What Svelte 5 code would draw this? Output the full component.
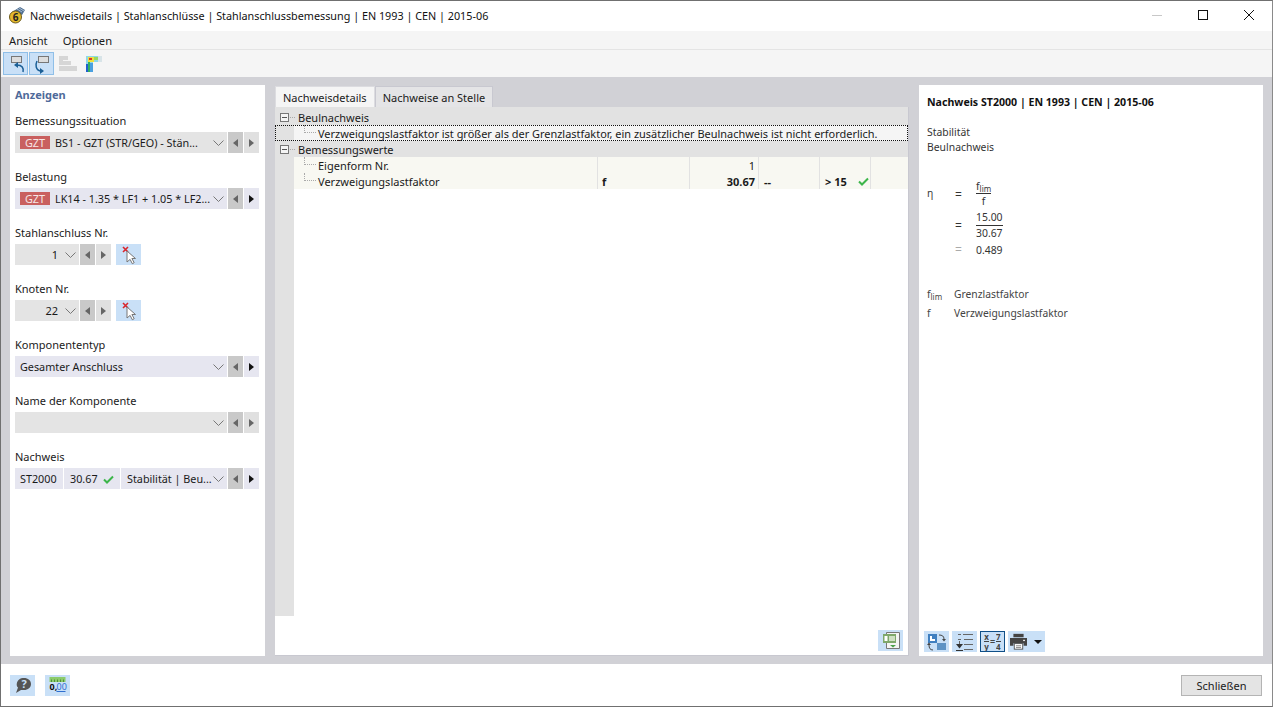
<script lang="ts">
  interface Field {
    label: string;
    kind: 'combo' | 'short' | 'check';
    text?: string;
    badge?: boolean;
    active?: boolean;
  }

  const fields: Field[] = [
    { label: 'Bemessungssituation', kind: 'combo', badge: true, text: 'BS1 - GZT (STR/GEO) - Stän...' },
    { label: 'Belastung', kind: 'combo', badge: true, active: true, text: 'LK14 - 1.35 * LF1 + 1.05 * LF2...' },
    { label: 'Stahlanschluss Nr.', kind: 'short', text: '1' },
    { label: 'Knoten Nr.', kind: 'short', text: '22' },
    { label: 'Komponententyp', kind: 'combo', active: true, text: 'Gesamter Anschluss' },
    { label: 'Name der Komponente', kind: 'combo', text: '' },
    { label: 'Nachweis', kind: 'check', active: true }
  ];
</script>

{#snippet chevron()}
  <svg class="chev" width="11" height="6" viewBox="0 0 11 6"><path d="M.5.5l5 5 5-5" fill="none" stroke="#777" /></svg>
{/snippet}

{#snippet tick()}
  <svg width="11" height="9" viewBox="0 0 11 9"><path d="M1 4.500l3 3 6-6" fill="none" stroke="#3cb54a" stroke-width="2" /></svg>
{/snippet}

{#snippet nav(active = false)}
  <button class="nav" aria-label="Zurück"><i class="tri tri-back"></i></button>
  <button class="nav next" class:active aria-label="Weiter"><i class="tri tri-fwd"></i></button>
{/snippet}

{#snippet picker()}
  <button class="pick" aria-label="Auswählen">
    <svg width="20" height="20" viewBox="0 0 20 20">
      <path d="M4 2l5 5M9 2L4 7" stroke="#d9262c" stroke-width="1.600" />
      <path d="M8 6l8.500 7.500h-3.600l2.300 4.200-1.900 1-2.200-4.300L8 17z" fill="#fff" stroke="#777" />
    </svg>
  </button>
{/snippet}

<div class="window">
  <header class="titlebar">
    <svg class="logo" width="18" height="18" viewBox="0 0 18 18">
      <path d="M4 6L12 1l5 3-3 5z" fill="#4f6f92" />
      <path d="M9 3l5 3M11 2l5 3" stroke="#a8bcd0" />
      <circle cx="7.500" cy="11" r="6" fill="#e3b92c" stroke="#6d5a1a" />
      <text x="7.500" y="15" class="logo-six">6</text>
    </svg>
    <span class="title">Nachweisdetails | Stahlanschlüsse | Stahlanschlussbemessung | EN 1993 | CEN | 2015-06</span>
    <div class="winbtns">
      <svg width="46" height="30" viewBox="0 0 46 30"><path d="M18 15.500h10" stroke="#c8c8c8" /></svg>
      <svg width="46" height="30" viewBox="0 0 46 30"><rect x="18.500" y="10.500" width="9" height="9" fill="none" stroke="#111" /></svg>
      <svg width="46" height="30" viewBox="0 0 46 30"><path d="M18 10l10 10M28 10L18 20" stroke="#111" /></svg>
    </div>
  </header>

  <nav class="menu"><span>Ansicht</span><span>Optionen</span></nav>

  <div class="toolbar">
    <button class="tool on" aria-label="Zurück">
      <svg width="22" height="22" viewBox="0 0 22 22">
        <rect x="6.500" y="3.500" width="10" height="6" fill="#ddd" stroke="#777" />
        <path d="M18 19c1-4-1-7-6-7" fill="none" stroke="#1b5f96" stroke-width="1.500" />
        <path d="M9 12l4-3v6z" fill="#1b5f96" />
      </svg>
    </button>
    <button class="tool on" aria-label="Vor">
      <svg width="22" height="22" viewBox="0 0 22 22">
        <rect x="7.500" y="3.500" width="10" height="6" fill="#ddd" stroke="#777" />
        <path d="M6 8c-2 4-1 9 3 10" fill="none" stroke="#1b5f96" stroke-width="1.500" />
        <path d="M13 18l-4-3v6z" fill="#1b5f96" />
      </svg>
    </button>
    <button class="tool" aria-label="Tabelle">
      <svg width="20" height="18" viewBox="0 0 20 18" fill="#d6d6d6">
        <rect x="1" y="1" width="9" height="4" /><rect x="1" y="5" width="4" height="5" />
        <rect x="1" y="6" width="12" height="4" /><rect x="1" y="11" width="18" height="5" />
      </svg>
    </button>
    <button class="tool" aria-label="Ergebnisse">
      <svg width="17" height="18" viewBox="0 0 17 18">
        <path d="M1 1h16v6H8v10H1z" fill="#8fd8e8" />
        <path d="M1 17V9h2v8z" fill="#1f5fd0" />
        <path d="M3 17V7h2v10z" fill="#30b060" />
        <path d="M5 17V8h3v9z" fill="#4aa0e0" />
        <path d="M3 2h6v5H3z" fill="#f0e03c" />
        <path d="M4 3h3v2H4z" fill="#d8342c" />
        <path d="M9 2h4v3H9z" fill="#9ad860" />
        <path d="M13 1h4v6h-4z" fill="#d8e4e8" />
      </svg>
    </button>
  </div>

  <main class="body">
    <aside class="panel panel-left">
      <h2>Anzeigen</h2>
      {#each fields as f}
        <div class="field">
          <span class="label">{f.label}</span>
          <div class="row">
            {#if f.kind === 'short'}
              <div class="combo short"><span class="val">{f.text}</span>{@render chevron()}</div>
              {@render nav()}
              {@render picker()}
            {:else if f.kind === 'check'}
              <div class="combo active">
                <span class="cell first">ST2000</span>
                <span class="cell second">30.67 {@render tick()}</span>
                <span class="txt">Stabilität | Beu...</span>
                {@render chevron()}
              </div>
              {@render nav(true)}
            {:else}
              <div class="combo" class:active={f.active}>
                {#if f.badge}<span class="badge">GZT</span>{/if}
                <span class="txt">{f.text}</span>
                {@render chevron()}
              </div>
              {@render nav(f.active)}
            {/if}
          </div>
        </div>
      {/each}
    </aside>

    <section class="center">
      <div class="tabs">
        <span class="tab current">Nachweisdetails</span>
        <span class="tab">Nachweise an Stelle</span>
      </div>
      <div class="sheet">
        <div class="rows">
          <div class="group">
            <span class="toggle"></span><span class="dash"></span>Beulnachweis
          </div>
          <div class="message"><span class="branch"></span>Verzweigungslastfaktor ist größer als der Grenzlastfaktor, ein zusätzlicher Beulnachweis ist nicht erforderlich.</div>
          <div class="group">
            <span class="toggle"></span><span class="dash"></span>Bemessungswerte
          </div>
          <div class="data">
            <div class="c name"><span class="branch"></span>Eigenform Nr.</div>
            <div class="c"></div>
            <div class="c num">1</div>
            <div class="c"></div>
            <div class="c"></div>
            <div class="c last"></div>
          </div>
          <div class="data">
            <div class="c name"><span class="branch"></span>Verzweigungslastfaktor</div>
            <div class="c sym">f</div>
            <div class="c num strong">30.67</div>
            <div class="c strong pad">--</div>
            <div class="c strong limit">&gt; 15 {@render tick()}</div>
            <div class="c last"></div>
          </div>
        </div>
        <div class="sheet-foot">
          <button class="tool-sm" aria-label="Export">
            <svg width="22" height="20" viewBox="0 0 22 20">
              <path d="M6.500 1.500h13v16h-13z" fill="#f4f4f4" stroke="#777" />
              <rect x="3" y="3" width="13" height="9" fill="#7fa86b" />
              <rect x="4.500" y="5" width="3" height="5" fill="#fff" />
              <path d="M9 5h6v5H9z" fill="#cfe0c4" />
              <path d="M10 14h6l-3 2.500z" fill="#4aa04a" />
            </svg>
          </button>
        </div>
      </div>
    </section>

    <aside class="panel panel-right">
      <h3>Nachweis ST2000 | EN 1993 | CEN | 2015-06</h3>
      <p class="desc">Stabilität<br />Beulnachweis</p>
      <div class="formula">
        <span class="eta">η</span><span class="eq">=</span>
        <span class="frac tight"><span class="top">f<sub>lim</sub></span><span>f</span></span>
        <span></span><span class="eq">=</span>
        <span class="frac"><span class="top">15.00</span><span>30.67</span></span>
        <span></span><span class="eq faint">=</span>
        <span class="result">0.489</span>
      </div>
      <div class="legend">
        <span>f<sub>lim</sub></span><span>Grenzlastfaktor</span>
        <span>f</span><span>Verzweigungslastfaktor</span>
      </div>
      <div class="right-tools">
        <button class="tool-sm" aria-label="Ansicht">
          <svg width="22" height="20" viewBox="0 0 22 20">
            <rect x="2" y="2" width="9" height="9" fill="#3f7fc0" />
            <path d="M4 4h2v3h3v2H4z" fill="#fff" />
            <rect x="11" y="11" width="9" height="7" fill="#5f93c4" />
            <path d="M13 3c3 0 5 1 5 4M7 18c-3 0-4-2-4-5" fill="none" stroke="#444" />
            <path d="M16 7h4l-2 2.500zM1 13h4l-2-2.500z" fill="#444" />
          </svg>
        </button>
        <button class="tool-sm" aria-label="Sortierung">
          <svg width="22" height="20" viewBox="0 0 22 20" stroke="#666">
            <path d="M9 2.500h10M10 7.500h9M10 12.500h9M10 17.500h9M4 2.500h3M4 7.500h3" fill="none" />
            <path d="M5.500 9v4" fill="none" />
            <path d="M2 12h7l-3.500 4.500z" fill="#333" stroke="none" />
            <path d="M2 18.500h7" fill="none" stroke="#333" />
          </svg>
        </button>
        <button class="tool-sm framed" aria-label="Formel">
          <span class="mini-frac"><b>x</b><b>y</b></span><span class="mini-eq">=</span><span class="mini-frac"><b>7</b><b>4</b></span>
        </button>
        <button class="tool-sm print" aria-label="Drucken">
          <svg width="17" height="17" viewBox="0 0 20 20">
            <rect x="4" y="1" width="12" height="4" fill="#444" />
            <path d="M0 6h20v9h-4v-3H4v3H0z" fill="#444" />
            <rect x="5" y="12.500" width="10" height="6.500" fill="#fff" stroke="#444" />
            <path d="M7 15h6M7 17h6" stroke="#777" />
            <rect x="15.500" y="8" width="2" height="1.500" fill="#fff" />
          </svg>
          <i class="drop"></i>
        </button>
      </div>
    </aside>
  </main>

  <footer class="footer">
    <div class="foot-tools">
      <button class="tool-sm" aria-label="Hilfe">
        <svg width="20" height="20" viewBox="0 0 20 20">
          <path d="M11 3c4 0 7 2.500 7 6s-3 6-7 6H8l-5 3 2-5.500C3.800 11.500 3.500 10 3.800 8.500 4.500 5 7 3 11 3z" fill="#555" />
          <text x="11" y="13" class="help">?</text>
        </svg>
      </button>
      <button class="tool-sm" aria-label="Einheiten">
        <svg width="24" height="21" viewBox="0 0 24 21">
          <rect x="3.500" y="2" width="16" height="5" fill="#8ccb6b" />
          <path d="M5.500 4.500v2.500M8.500 4.500v2.500M11.500 4.500v2.500M14.500 4.500v2.500M17.500 4.500v2.500" stroke="#4f8f3a" />
          <text x="3.500" y="15" class="units">0,</text>
          <text x="10.500" y="15" class="units blue">00</text>
          <path d="M10.500 16.500h9" stroke="#2f6fd0" />
        </svg>
      </button>
    </div>
    <button class="close">Schließen</button>
  </footer>
</div>

<style>
  :global(body) {
    margin: 0;
    background: #fff;
  }

  .window {
    box-sizing: border-box;
    width: 1273px;
    height: 707px;
    display: flex;
    flex-direction: column;
    border: 1px solid #707070;
    border-right-color: #8a8a8a;
    font-family: "Noto Sans", "Open Sans", sans-serif;
    font-size: 11px;
    color: #1a1a1a;
    overflow: hidden;
  }

  button {
    padding: 0;
    border: none;
    font: inherit;
    display: flex;
    align-items: center;
    justify-content: center;
  }

  .titlebar {
    box-sizing: border-box;
    height: 30px;
    flex: none;
    display: flex;
    align-items: center;
    padding-bottom: 2px;
    background: #fff;
  }

  .logo { margin-left: 7px; }
  .logo-six { font-size: 10px; font-weight: 700; text-anchor: middle; fill: #222; }

  .title {
    margin-left: 4px;
    font-size: 10.800px;
    color: #111;
  }

  .winbtns {
    margin-left: auto;
    display: flex;
  }

  .menu {
    height: 18px;
    flex: none;
    display: flex;
    align-items: center;
    gap: 15px;
    padding-left: 8px;
    background: #f5f5f5;
    border-bottom: 1px solid #e4e4e4;
    font-size: 11.200px;
  }

  .toolbar {
    height: 27px;
    flex: none;
    display: flex;
    align-items: center;
    gap: 1px;
    padding-left: 2px;
    background: #f5f5f5;
  }

  .tool {
    box-sizing: border-box;
    width: 25px;
    height: 23px;
    background: transparent;
  }

  .tool.on {
    background: #c9e0f7;
    border: 1px solid #8fbfe8;
  }

  .body {
    flex: 1;
    min-height: 0;
    display: flex;
    gap: 10px;
    padding: 8px 9px;
    background: #d1d1d6;
  }

  .panel {
    background: #fff;
    box-sizing: border-box;
  }

  .panel-left {
    width: 255px;
    flex: none;
    padding: 2px 5px 0;
  }

  .panel-left h2 {
    margin: 0 0 10px;
    font-size: 11px;
    font-weight: 700;
    line-height: 15px;
    color: #4f6a9a;
  }

  .field {
    height: 56px;
  }

  .label {
    display: block;
    line-height: 18px;
    margin-bottom: 2px;
  }

  .row {
    display: flex;
    height: 21px;
    gap: 1px;
  }

  .combo {
    width: 212px;
    box-sizing: border-box;
    display: flex;
    align-items: center;
    padding: 0 3px 0 5px;
    background: #e4e4e4;
    white-space: nowrap;
    font-size: 10.800px;
  }

  .combo.active { background: #e6e6f0; }

  .combo.short {
    width: 64px;
    justify-content: flex-end;
  }

  .val { margin-right: 5px; font-size: 11px; }

  .badge {
    width: 30px;
    height: 13px;
    flex: none;
    display: flex;
    align-items: center;
    justify-content: center;
    margin-right: 5px;
    background: #c9605f;
    color: #f7e6e6;
  }

  .txt {
    flex: 1;
    min-width: 0;
  }

  .chev { flex: none; margin-left: 2px; }

  .cell {
    height: 100%;
    display: flex;
    align-items: center;
    gap: 5px;
    border-right: 1px solid #fff;
  }

  .first { width: 43px; }
  .second { width: 50px; padding-left: 6px; margin-right: 6px; }
  .second svg { margin-top: 1px; }

  .nav {
    width: 15px;
    height: 21px;
    background: #c9c9c9;
  }

  .nav.next { background: #e0e0e0; }
  .nav.next.active { background: #e6e6f0; }

  .tri {
    width: 0;
    height: 0;
    border-top: 4px solid transparent;
    border-bottom: 4px solid transparent;
  }

  .tri-back { border-right: 5px solid #666; }
  .tri-fwd { border-left: 5px solid #666; }
  .active .tri-fwd { border-left-color: #111; }

  .pick {
    width: 25px;
    height: 21px;
    margin-left: 4px;
    background: #c9e0f7;
  }

  .center {
    width: 634px;
    flex: none;
    display: flex;
    flex-direction: column;
  }

  .tabs {
    display: flex;
    padding-top: 1px;
    height: 21px;
    flex: none;
  }

  .tab {
    display: flex;
    align-items: center;
    padding: 0 7px;
    background: #e4e4e6;
    border: 1px solid #c8c8d0;
    border-bottom: none;
  }

  .tab.current {
    background: #f5f5f5;
    border-color: #dcdce0;
  }

  .sheet {
    flex: 1;
    min-height: 0;
    display: flex;
    flex-direction: column;
    background: #fff;
    border: 1px solid #c8c8d0;
    border-top: none;
    border-left: none;
    box-sizing: border-box;
  }

  .rows {
    flex: 1;
    min-height: 0;
    padding-top: 2px;
    background:
      linear-gradient(#e2e2e2, #e2e2e2) top / 100% 2px no-repeat,
      linear-gradient(90deg, #e2e2e2 19px, #fff 19px);
  }

  .group {
    height: 16px;
    display: flex;
    align-items: center;
    background: #e2e2e2;
    padding-left: 5px;
    white-space: nowrap;
  }

  .toggle {
    box-sizing: border-box;
    width: 9px;
    height: 9px;
    margin-right: 1px;
    border: 1px solid #777;
    background: linear-gradient(#555, #555) center / 5px 1px no-repeat, #f4f4f4;
  }

  .dash {
    width: 5px;
    margin-right: 3px;
    border-top: 1px dotted #aaa;
  }

  .message {
    height: 16px;
    box-sizing: border-box;
    display: flex;
    align-items: center;
    padding-left: 29px;
    background: linear-gradient(90deg, #e2e2e2 19px, #f5f5f5 19px);
    outline: 1px dotted #111;
    outline-offset: -1px;
    white-space: nowrap;
    font-size: 10.950px;
  }

  .branch {
    width: 12px;
    height: 8px;
    margin-right: 2px;
    margin-top: -8px;
    border-left: 1px dotted #aaa;
    border-bottom: 1px dotted #aaa;
    flex: none;
    box-sizing: border-box;
  }

  .data {
    height: 16px;
    display: grid;
    grid-template-columns: 323px 92px 69px 61px 51px 1fr;
    background: linear-gradient(90deg, #e2e2e2 19px, #f8f8f2 19px);
  }

  .c {
    display: flex;
    align-items: center;
    border-right: 1px solid #e2e2e2;
    white-space: nowrap;
    overflow: hidden;
  }

  .c.last { border-right: none; }
  .name { padding-left: 29px; }
  .sym { padding-left: 4px; font-weight: 700; }
  .num { justify-content: flex-end; padding-right: 3px; }
  .strong { font-weight: 700; }
  .pad { padding-left: 5px; }
  .limit { padding-left: 5px; gap: 11px; }

  .sheet-foot {
    height: 39px;
    flex: none;
    display: flex;
    justify-content: flex-end;
    align-items: center;
    padding: 10px 5px 0 0;
    box-sizing: border-box;
  }

  .tool-sm {
    width: 25px;
    height: 21px;
    background: #c9e0f7;
  }

  .panel-right {
    width: 344px;
    flex: none;
    padding: 10px 8px 4px;
    display: flex;
    flex-direction: column;
  }

  .panel-right h3 {
    margin: 0;
    font-size: 10.600px;
    line-height: 15px;
    font-weight: 700;
    color: #111;
  }

  .desc {
    margin: 15px 0 0;
    font-size: 10.400px;
    line-height: 15px;
    color: #333;
  }

  .formula {
    margin-top: 24px;
    display: grid;
    grid-template-columns: 28px 21px max-content;
    align-items: center;
    font-size: 10.400px;
    color: #333;
  }

  .eta { color: #3a3a3a; margin-top: -3px; }
  .eq { font-size: 12px; }
  .faint { color: #aaa; }

  .frac {
    justify-self: start;
    display: flex;
    flex-direction: column;
    align-items: center;
    line-height: 15px;
  }

  .frac .top {
    align-self: stretch;
    text-align: center;
    border-bottom: 1px solid #333;
  }

  .frac.tight { margin-bottom: 1px; }
  .frac.tight .top { line-height: 14px; }

  sub { font-size: 8px; line-height: 0; vertical-align: -2px; }

  .result { line-height: 16px; }

  .legend {
    margin-top: 29px;
    display: grid;
    grid-template-columns: 27px 1fr;
    row-gap: 4px;
    font-size: 10.300px;
    line-height: 15px;
    color: #444;
  }

  .right-tools {
    margin-top: auto;
    display: flex;
    gap: 3px;
    margin-left: -3px;
  }

  .framed {
    box-sizing: border-box;
    border: 1px solid #0f4f88;
    gap: 1px;
    color: #444;
  }

  .mini-frac {
    display: flex;
    flex-direction: column;
    align-items: center;
    font-size: 8px;
    line-height: 9px;
  }

  .mini-frac b {
    display: block;
    height: 9px;
    overflow: hidden;
  }

  .mini-frac b + b { border-top: 1px solid #444; }
  .mini-eq { font-size: 9px; font-weight: 700; }

  .print {
    width: 37px;
    justify-content: flex-start;
    padding-left: 2px;
    gap: 7px;
  }

  .drop {
    width: 0;
    height: 0;
    border-left: 4px solid transparent;
    border-right: 4px solid transparent;
    border-top: 4px solid #111;
  }

  .footer {
    height: 42px;
    flex: none;
    display: flex;
    align-items: center;
    justify-content: space-between;
    padding: 0 10px 0 9px;
    background: #fff;
  }

  .foot-tools {
    display: flex;
    gap: 10px;
  }

  .help { font-size: 11px; font-weight: 700; fill: #c9e0f7; text-anchor: middle; }
  .units { font-size: 9px; font-weight: 700; fill: #111; }
  .units.blue { fill: #2f6fd0; font-weight: 400; }

  .close {
    width: 81px;
    height: 21px;
    background: #e4e4e4;
    border: 1px solid #b4b4b4;
    box-sizing: border-box;
    color: #1a1a1a;
  }
</style>
